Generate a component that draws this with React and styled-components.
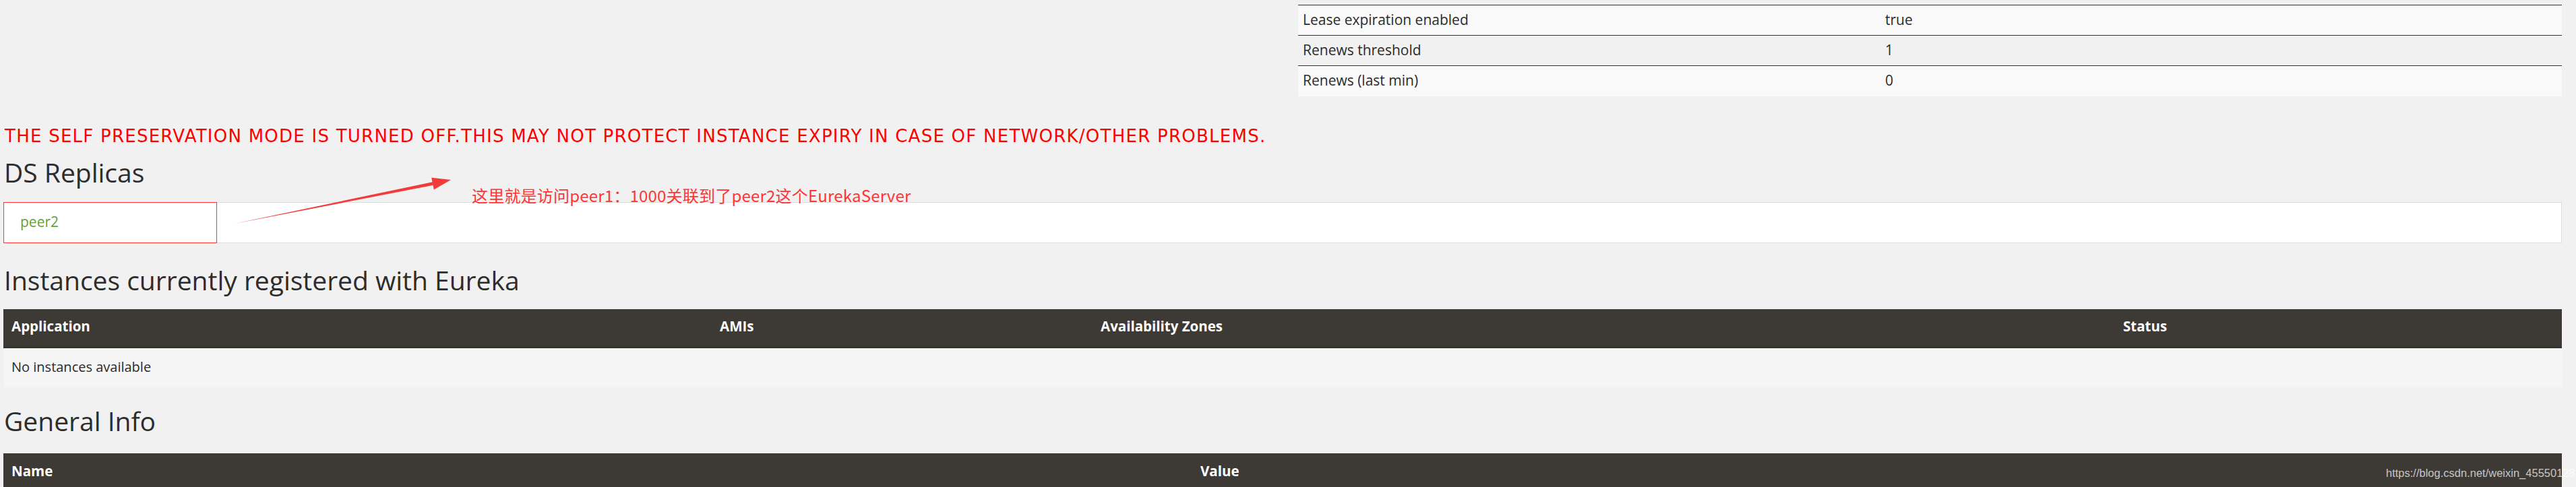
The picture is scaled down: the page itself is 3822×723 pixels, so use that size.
import React from 'react'
import styled, { createGlobalStyle } from 'styled-components'

const GlobalStyle = createGlobalStyle`
  html, body {
    margin: 0;
    padding: 0;
    background-color: #f1f1f1;
    overflow: hidden;
  }

  body {
    font-family: "Open Sans", "Noto Sans", sans-serif;
    color: #2b2b2b;
  }
`

const Page = styled.div`
  position: relative;
  padding: 0 21px 0 5px;
  min-height: 723px;
`

const StatusGrid = styled.div`
  display: grid;
  grid-template-columns: 1921px 1fr;
  padding-top: 7px;
`

const StatusTable = styled.table`
  width: 100%;
  border-collapse: collapse;
  font-size: 21px;
`

const StatusRow = styled.tr`
  background-color: #f9f9f9;

  &:nth-child(even) {
    background-color: #f1f1f1;
  }
`

const StatusCell = styled.td`
  height: 45px;
  padding: 0 7px 2px;
  border-top: 1px solid #333;
  vertical-align: middle;
  width: ${props => props.$width || 'auto'};
  box-sizing: border-box;
`

const Warning = styled.div`
  margin-top: 44px;
  margin-left: 2px;
  font-family: "DejaVu Sans", Verdana, sans-serif;
  font-size: 26px;
  letter-spacing: 1.25px;
  line-height: 31px;
  color: #ff0000;
  white-space: nowrap;
`

const SectionTitle = styled.h2`
  margin: ${props => props.$top}px 0 ${props => props.$bottom}px 1px;
  font-family: "Open Sans", "Noto Sans", sans-serif;
  font-weight: 400;
  font-size: 39px;
  line-height: 44px;
  color: #2d2d2d;
`

const ReplicaPanel = styled.div`
  position: relative;
  display: flex;
  align-items: center;
  height: 61px;
  box-sizing: border-box;
  padding: 0 0 2px 24px;
  background-color: #fff;
  border: 1px solid #dcdcdc;
`

const ReplicaLink = styled.a`
  font-size: 21px;
  color: #65a03a;
  text-decoration: none;
`

const Highlight = styled.div`
  position: absolute;
  left: -1px;
  top: -1px;
  width: 317px;
  height: 61px;
  border: 1.5px solid #f33;
  box-sizing: border-box;
  pointer-events: none;
`

const Callout = styled.div`
  position: absolute;
  left: 700px;
  top: 276px;
  font-family: "Noto Sans CJK SC", "Noto Sans", sans-serif;
  font-size: 24px;
  letter-spacing: 0.2px;
  line-height: 28px;
  color: #ff3535;
  white-space: nowrap;
`

const CalloutArrow = styled.svg`
  position: absolute;
  left: 340px;
  top: 260px;
  overflow: visible;
`

const DataTable = styled.table`
  width: 100%;
  border-collapse: collapse;
  font-size: 20px;
`

const HeadCell = styled.th`
  height: 57px;
  padding: 0 12px 4px;
  width: ${props => props.$width || 'auto'};
  box-sizing: border-box;
  background-color: #3d3935;
  border-bottom: 3px solid #35312d;
  color: #fff;
  font-weight: 700;
  font-size: 20.5px;
  text-align: left;
  vertical-align: middle;
`

const BodyCell = styled.td`
  height: 54px;
  padding: 0 12px 4px;
  background-color: #f5f5f5;
  vertical-align: middle;
`

const Watermark = styled.div`
  position: absolute;
  left: 3540px;
  top: 693px;
  font-family: "Liberation Sans", Arial, sans-serif;
  font-size: 16.5px;
  color: rgba(255, 255, 255, 0.72);
  white-space: nowrap;
`

const statusRows = [
  ['Lease expiration enabled', 'true'],
  ['Renews threshold', '1'],
  ['Renews (last min)', '0']
]

const App = () => {
  return (
    <>
      <GlobalStyle />
      <Page>
        <StatusGrid>
          <div />
          <StatusTable>
            <tbody>
              {statusRows.map(([name, value]) => (
                <StatusRow key={name}>
                  <StatusCell $width="864px">{name}</StatusCell>
                  <StatusCell>{value}</StatusCell>
                </StatusRow>
              ))}
            </tbody>
          </StatusTable>
        </StatusGrid>

        <Warning>
          THE SELF PRESERVATION MODE IS TURNED OFF.THIS MAY NOT PROTECT INSTANCE EXPIRY IN CASE OF NETWORK/OTHER PROBLEMS.
        </Warning>

        <SectionTitle $top={16} $bottom={22}>DS Replicas</SectionTitle>
        <ReplicaPanel>
          <ReplicaLink href="#peer2">peer2</ReplicaLink>
          <Highlight />
        </ReplicaPanel>

        <SectionTitle $top={33} $bottom={21}>Instances currently registered with Eureka</SectionTitle>
        <DataTable>
          <thead>
            <tr>
              <HeadCell $width="1051px">Application</HeadCell>
              <HeadCell $width="565px">AMIs</HeadCell>
              <HeadCell $width="1517px">Availability Zones</HeadCell>
              <HeadCell>Status</HeadCell>
            </tr>
          </thead>
          <tbody>
            <tr>
              <BodyCell colSpan={4}>No instances available</BodyCell>
            </tr>
          </tbody>
        </DataTable>

        <SectionTitle $top={28} $bottom={26}>General Info</SectionTitle>
        <DataTable>
          <thead>
            <tr>
              <HeadCell $width="1764px">Name</HeadCell>
              <HeadCell>Value</HeadCell>
            </tr>
          </thead>
        </DataTable>

        <CalloutArrow width="340" height="80" viewBox="0 0 340 80">
          <polygon
            points="8,72 302.5,15 303.8,21.4 329,7 300.2,3.8 301.5,10.2"
            fill="#f33b3b"
          />
        </CalloutArrow>
        <Callout>这里就是访问peer1：1000关联到了peer2这个EurekaServer</Callout>
        <Watermark>https://blog.csdn.net/weixin_45550128</Watermark>
      </Page>
    </>
  )
}

export default App
